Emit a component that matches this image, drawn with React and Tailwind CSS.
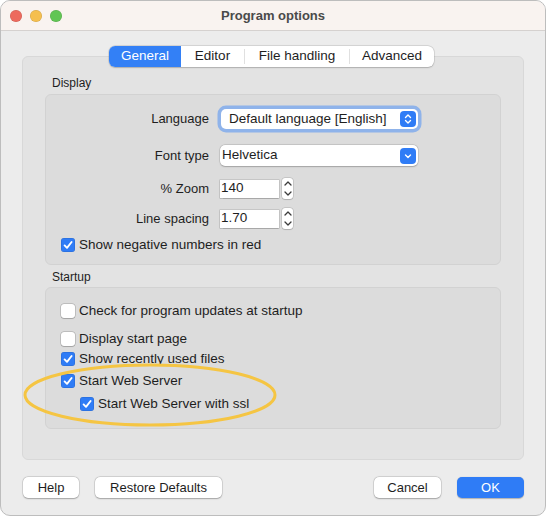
import React from "react";

const font = { fontFamily: '"Liberation Sans", Arial, sans-serif' };

function Check({ checked }) {
  if (checked) {
    return (
      <span className="w-[14px] h-[14px] rounded-[3px] bg-[#2f7cf6] shadow-[inset_0_0_0_0.5px_rgba(0,0,0,0.15)] flex items-center justify-center shrink-0">
        <svg width="12" height="12" viewBox="0 0 12 12">
          <path d="M2.6 6.4 L5 8.8 L9.6 3" fill="none" stroke="white" strokeWidth="1.9" strokeLinecap="round" strokeLinejoin="round" />
        </svg>
      </span>
    );
  }
  return (
    <span className="w-[14px] h-[14px] rounded-[3px] bg-white shadow-[0_0_0_0.5px_rgba(0,0,0,0.25),0_0.5px_1px_rgba(0,0,0,0.15)] shrink-0" />
  );
}

function CheckRow({ checked, label, className = "" }) {
  return (
    <div className={"flex items-center h-[14px] " + className}>
      <Check checked={checked} />
      <span className="ml-[4px] text-[13.5px] text-[#1e1e1e] leading-[14px] whitespace-nowrap">{label}</span>
    </div>
  );
}

function Spinner() {
  return (
    <div className="ml-[3px] w-[11px] h-[21px] rounded-[3px] bg-white shadow-[0_0_0_0.5px_rgba(0,0,0,0.18),0_0.5px_1px_rgba(0,0,0,0.12)] flex flex-col items-center justify-between py-[3px]">
      <svg width="8" height="5" viewBox="0 0 8 5">
        <path d="M1 4 L4 1 L7 4" fill="none" stroke="#3a3a3a" strokeWidth="1.3" strokeLinecap="round" strokeLinejoin="round" />
      </svg>
      <svg width="8" height="5" viewBox="0 0 8 5">
        <path d="M1 1 L4 4 L7 1" fill="none" stroke="#3a3a3a" strokeWidth="1.3" strokeLinecap="round" strokeLinejoin="round" />
      </svg>
    </div>
  );
}

function Btn({ children, primary, w }) {
  return (
    <div
      className={
        "h-[21px] rounded-[5px] flex items-center justify-center text-[13px] " +
        (primary
          ? "bg-[#2f7cf6] text-white shadow-[0_0.5px_1px_rgba(0,0,0,0.25)] "
          : "bg-white text-[#1e1e1e] shadow-[0_0_0_0.5px_rgba(0,0,0,0.15),0_0.5px_1.5px_rgba(0,0,0,0.25)] ") +
        w
      }
    >
      {children}
    </div>
  );
}

export default function App() {
  return (
    <div style={font} className="w-[546px] h-[516px] bg-white">
      <div className="relative w-[546px] h-[516px] rounded-[10px] overflow-hidden bg-[#ececec] border border-[#bdbdbd] flex flex-col">
        {/* Title bar */}
        <div className="h-[30px] shrink-0 bg-[#f9f3f0] border-b border-[#d5d1cf] flex items-center relative">
          <div className="flex items-center gap-[8px] pl-[9px]">
            <span className="w-[12px] h-[12px] rounded-full bg-[#ed6a5e] shadow-[inset_0_0_0_0.5px_rgba(0,0,0,0.15)]" />
            <span className="w-[12px] h-[12px] rounded-full bg-[#f5bf4f] shadow-[inset_0_0_0_0.5px_rgba(0,0,0,0.15)]" />
            <span className="w-[12px] h-[12px] rounded-full bg-[#61c554] shadow-[inset_0_0_0_0.5px_rgba(0,0,0,0.15)]" />
          </div>
          <div className="absolute inset-0 flex items-center justify-center text-[13px] font-bold text-[#4a4a4a]">
            Program options
          </div>
        </div>

        {/* Body */}
        <div className="px-[21px] pt-[15px] flex flex-col">
          {/* Tabs */}
          <div className="relative z-10 flex justify-center pr-[3px]">
            <div className="flex h-[21px] rounded-[6px] bg-white shadow-[0_0_0_0.5px_rgba(0,0,0,0.14),0_0.5px_1.5px_rgba(0,0,0,0.18)] text-[13.5px] text-[#1e1e1e]">
              <div className="w-[72px] rounded-l-[6px] bg-[#3380f6] text-white flex items-center justify-center">General</div>
              <div className="w-[63px] flex items-center justify-center">Editor</div>
              <div className="w-px my-[3px] bg-[#e0e0e0]" />
              <div className="w-[104px] flex items-center justify-center">File handling</div>
              <div className="w-px my-[3px] bg-[#e0e0e0]" />
              <div className="w-[84px] flex items-center justify-center">Advanced</div>
            </div>
          </div>

          {/* Tab pane */}
          <div className="-mt-[11px] h-[404px] rounded-[6px] bg-[#e3e3e3] border border-[#d8d8d8] px-[22px] pt-[19px] flex flex-col">
            <div className="pl-[7px] text-[12px] leading-[15px] text-[#1e1e1e]">Display</div>
            <div className="mt-[3px] rounded-[6px] bg-[#dcdcdc] border border-[#d2d2d2] flex flex-col pb-[12px]">
              {/* Language */}
              <div className="mt-[12px] flex items-center h-[24px]">
                <div className="w-[163px] text-right text-[13px] text-[#1e1e1e]">Language</div>
                <div className="ml-[12px] w-[197px] h-[20px] rounded-[5px] bg-white shadow-[0_0_0_3.5px_rgba(80,145,245,0.55)] flex items-center justify-between pl-[8px] pr-[2px]">
                  <span className="text-[13.5px] text-[#1e1e1e]">Default language [English]</span>
                  <span className="w-[16px] h-[16px] rounded-[4px] bg-[#2f7cf6] flex items-center justify-center">
                    <svg width="10" height="12" viewBox="0 0 10 12">
                      <path d="M2.5 4.5 L5 2 L7.5 4.5 M2.5 7.5 L5 10 L7.5 7.5" fill="none" stroke="white" strokeWidth="1.4" strokeLinecap="round" strokeLinejoin="round" />
                    </svg>
                  </span>
                </div>
              </div>
              {/* Font type */}
              <div className="mt-[14px] flex items-center h-[21px]">
                <div className="w-[163px] text-right text-[13px] text-[#1e1e1e]">Font type</div>
                <div className="ml-[11px] w-[198px] h-[21px] rounded-[5px] bg-white shadow-[0_0_0_0.5px_rgba(0,0,0,0.15),0_0.5px_1.5px_rgba(0,0,0,0.2)] flex items-center justify-between pl-[2px] pr-[2px]">
                  <span className="text-[13.5px] text-[#1e1e1e]">Helvetica</span>
                  <span className="w-[16px] h-[16px] rounded-[4px] bg-[#2f7cf6] flex items-center justify-center">
                    <svg width="10" height="10" viewBox="0 0 10 10">
                      <path d="M2.5 4 L5 6.5 L7.5 4" fill="none" stroke="white" strokeWidth="1.4" strokeLinecap="round" strokeLinejoin="round" />
                    </svg>
                  </span>
                </div>
              </div>
              {/* Zoom */}
              <div className="mt-[12px] flex items-center h-[21px]">
                <div className="w-[163px] text-right text-[13px] text-[#1e1e1e]">% Zoom</div>
                <div className="ml-[11px] w-[59px] h-[18px] bg-white shadow-[0_0_0_0.5px_rgba(0,0,0,0.2),0_0.5px_1px_rgba(0,0,0,0.15)] flex items-center pl-[1px] text-[13.5px] text-[#1e1e1e]">140</div>
                <Spinner />
              </div>
              {/* Line spacing */}
              <div className="mt-[9px] flex items-center h-[21px]">
                <div className="w-[163px] text-right text-[13px] text-[#1e1e1e]">Line spacing</div>
                <div className="ml-[11px] w-[59px] h-[18px] bg-white shadow-[0_0_0_0.5px_rgba(0,0,0,0.2),0_0.5px_1px_rgba(0,0,0,0.15)] flex items-center pl-[1px] text-[13.5px] text-[#1e1e1e]">1.70</div>
                <Spinner />
              </div>
              <CheckRow checked label="Show negative numbers in red" className="mt-[9px] ml-[15px]" />
            </div>

            <div className="mt-[5px] pl-[7px] text-[12px] leading-[15px] text-[#1e1e1e]">Startup</div>
            <div className="relative mt-[2px] rounded-[6px] bg-[#dcdcdc] border border-[#d2d2d2] flex flex-col pb-[17px]">
              <CheckRow label="Check for program updates at startup" className="mt-[16px] ml-[15px]" />
              <CheckRow label="Display start page" className="mt-[14px] ml-[15px]" />
              <CheckRow checked label="Show recently used files" className="mt-[6px] ml-[15px]" />
              <CheckRow checked label="Start Web Server" className="mt-[8px] ml-[15px]" />
              <CheckRow checked label="Start Web Server with ssl" className="mt-[9px] ml-[34px]" />
            </div>
          </div>

          {/* Buttons */}
          <div className="mt-[17px] flex items-center pl-[1px]">
            <Btn w="w-[56px]">Help</Btn>
            <div className="w-[16px]" />
            <Btn w="w-[127px]">Restore Defaults</Btn>
            <div className="flex-1" />
            <Btn w="w-[67px]">Cancel</Btn>
            <div className="w-[16px]" />
            <Btn primary w="w-[67px]">OK</Btn>
          </div>
        </div>

        {/* Highlight ellipse annotation */}
        <svg className="absolute left-0 top-0 pointer-events-none" width="546" height="516">
          <ellipse cx="149" cy="394" rx="125" ry="30" fill="none" stroke="#f5c543" strokeWidth="3" />
        </svg>
      </div>
    </div>
  );
}
